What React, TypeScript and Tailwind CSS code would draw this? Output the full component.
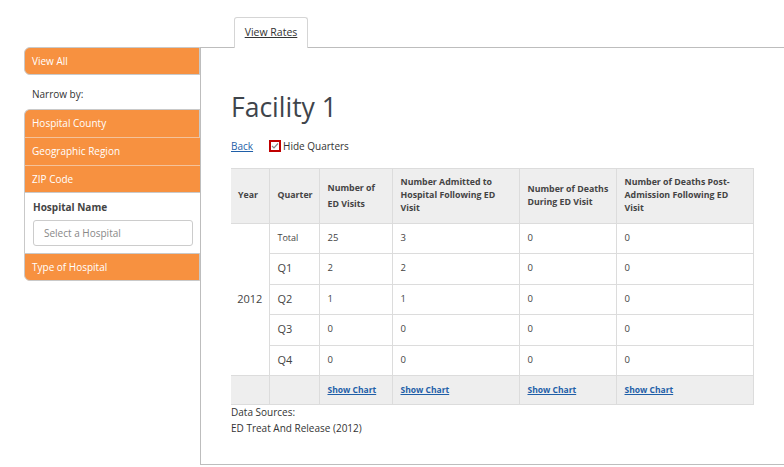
export default function App() {
  const rows = [
    { q: "Total", v: ["25", "3", "0", "0"], small: true },
    { q: "Q1", v: ["2", "2", "0", "0"] },
    { q: "Q2", v: ["1", "1", "0", "0"] },
    { q: "Q3", v: ["0", "0", "0", "0"] },
    { q: "Q4", v: ["0", "0", "0", "0"] },
  ];
  const heights = ["h-[30px]", "h-[31px]", "h-[30px]", "h-[31px]", "h-[30px]"];

  return (
    <div className="w-[784px] h-[467px] bg-white text-[#333] font-['Open_Sans',sans-serif] overflow-hidden">
      {/* Tabs */}
      <div className="h-[47px] flex items-end pl-[234px]">
        <div className="w-[74px] h-[31px] border border-b-0 border-[#d5d5d5] rounded-t-[3px] bg-white flex items-center justify-center relative top-[1px]">
          <span className="text-[10.5px] underline text-[#333]">View Rates</span>
        </div>
      </div>

      <div className="flex">
        {/* Sidebar */}
        <div className="w-[200px] pl-[24px] text-[10px]">
          <div className="h-[28px] bg-[#f79140] border border-[#c9c9c9] rounded-l-[6px] text-white flex items-center pl-[7px]">
            View All
          </div>
          <div className="h-[34px] flex items-center pl-[8px] pt-[4px] text-[#333]">Narrow by:</div>
          <div className="h-[28px] bg-[#f79140] border border-b-0 border-[#c9c9c9] rounded-tl-[6px] text-white flex items-center pl-[7px]">
            Hospital County
          </div>
          <div className="h-[28px] bg-[#f79140] border-l border-t border-[#c9c9c9] border-t-[#f4c29a] text-white flex items-center pl-[7px]">
            Geographic Region
          </div>
          <div className="h-[28px] bg-[#f79140] border-l border-t border-b border-[#c9c9c9] border-t-[#f4c29a] text-white flex items-center pl-[7px]">
            ZIP Code
          </div>
          <div className="h-[60px] border-l border-[#c9c9c9] pl-[8px] pt-[7px]">
            <div className="font-bold text-[#444]">Hospital Name</div>
            <div className="mt-[5px] w-[160px] h-[26px] border border-[#ccc] rounded-[3px] flex items-center pl-[10px] text-[#888]">
              Select a Hospital
            </div>
          </div>
          <div className="h-[28px] bg-[#f79140] border border-[#c9c9c9] rounded-bl-[6px] text-white flex items-center pl-[7px]">
            Type of Hospital
          </div>
        </div>

        {/* Main panel */}
        <div className="flex-1 h-[418px] border-l border-t border-b border-[#bdbdbd] pl-[30px]">
          <h1 className="text-[26.5px] leading-none text-[#3e444b] mt-[46px]">Facility 1</h1>
          <div className="mt-[18px] flex items-center text-[10px]">
            <a className="text-[#1f5fa8] underline">Back</a>
            <span className="ml-[16px] w-[12px] h-[12px] border-2 border-[#c00000] flex items-center justify-center">
              <svg width="8" height="8" viewBox="0 0 8 8">
                <path d="M1 4 L3 6 L7 1.5" fill="none" stroke="#888" strokeWidth="1.2" />
              </svg>
            </span>
            <span className="ml-[2px] text-[#333]">Hide Quarters</span>
          </div>

          <table className="mt-[14px] w-[522px] border-collapse text-[10px] text-[#444] table-fixed">
            <colgroup>
              <col className="w-[38px]" />
              <col className="w-[50px]" />
              <col className="w-[73px]" />
              <col className="w-[127px]" />
              <col className="w-[97px]" />
              <col className="w-[137px]" />
            </colgroup>
            <thead>
              <tr className="h-[55px] bg-[#eeeeee] text-left text-[8.8px]">
                <th className="border border-[#dcdcdc] border-l-0 px-[7px] font-bold">Year</th>
                <th className="border border-[#dcdcdc] px-[8px] font-bold">Quarter</th>
                <th className="border border-[#dcdcdc] px-[8px] font-bold leading-[16px]">Number of ED Visits</th>
                <th className="border border-[#dcdcdc] px-[8px] font-bold leading-[13px]">
                  Number Admitted to Hospital Following ED Visit
                </th>
                <th className="border border-[#dcdcdc] px-[8px] font-bold leading-[13px] whitespace-nowrap">
                  Number of Deaths
                  <br />
                  During ED Visit
                </th>
                <th className="border border-[#dcdcdc] px-[8px] font-bold leading-[13px]">
                  Number of Deaths Post-Admission Following ED Visit
                </th>
              </tr>
            </thead>
            <tbody>
              {rows.map((r, i) => (
                <tr key={r.q} className={heights[i]}>
                  {i === 0 && (
                    <td rowSpan={5} className="border border-[#dcdcdc] border-l-0 text-[11px] text-center">
                      2012
                    </td>
                  )}
                  <td className={`border border-[#dcdcdc] px-[8px] ${r.small ? "text-[9px]" : "text-[11px]"}`}>{r.q}</td>
                  {r.v.map((v, j) => (
                    <td key={j} className="border border-[#dcdcdc] px-[8px] text-[9.5px]">
                      {v}
                    </td>
                  ))}
                </tr>
              ))}
              <tr className="h-[29px] bg-[#eeeeee]">
                <td className="border border-[#dcdcdc] border-l-0"></td>
                <td className="border border-[#dcdcdc]"></td>
                {[0, 1, 2, 3].map((k) => (
                  <td key={k} className="border border-[#dcdcdc] px-[8px] whitespace-nowrap">
                    <a className="text-[#1f5fa8] underline font-bold text-[8.5px]">Show Chart</a>
                  </td>
                ))}
              </tr>
            </tbody>
          </table>

          <div className="text-[10px] text-[#333] leading-[16px] mt-[-1px]">
            <div>Data Sources:</div>
            <div>ED Treat And Release (2012)</div>
          </div>
        </div>
      </div>
    </div>
  );
}
